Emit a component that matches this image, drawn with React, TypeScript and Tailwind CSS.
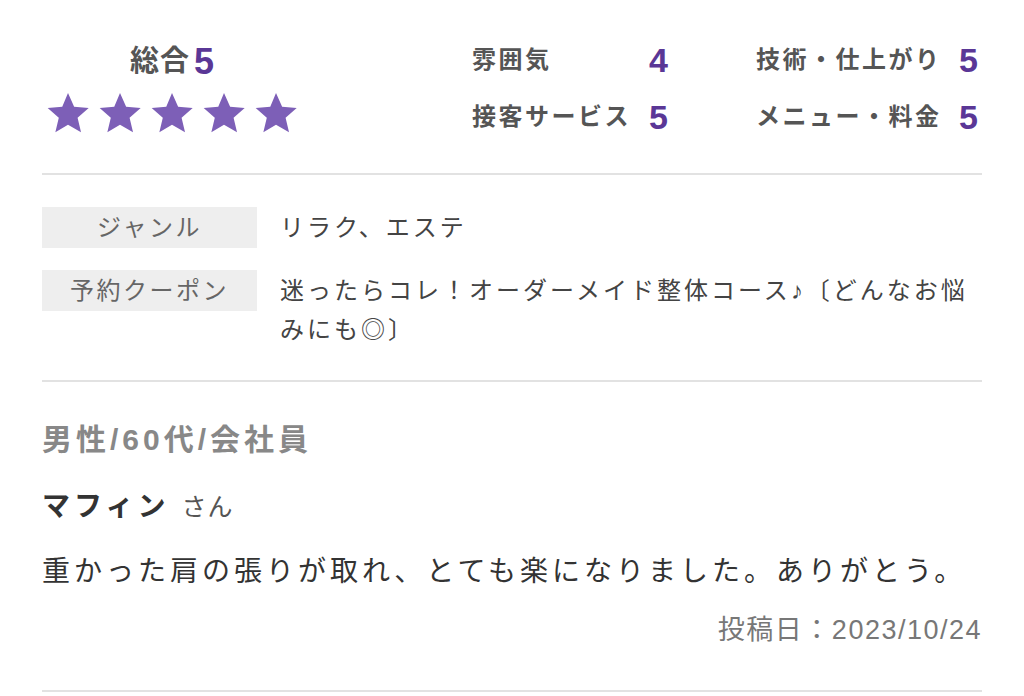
import React from 'react';

const FONT = { fontFamily: '"Liberation Sans", "Noto Sans CJK JP", sans-serif' };

type Rating = { label: string; score: number };

const col1: Rating[] = [
  { label: '雰囲気', score: 4 },
  { label: '接客サービス', score: 5 },
];
const col2: Rating[] = [
  { label: '技術・仕上がり', score: 5 },
  { label: 'メニュー・料金', score: 5 },
];

function Star() {
  return (
    <svg viewBox="0 0 24 24" className="w-[46px] h-[46px]" fill="#7d5fb7">
      <path d="M12 1.6l3.2 7.1 7.6.7-5.8 5.1 1.8 7.6L12 18.1l-6.6 4 1.8-7.6L1.4 9.4 9 8.7z" />
    </svg>
  );
}

function RatingItem({ label, score, width }: Rating & { width: string }) {
  return (
    <div className={`flex items-center justify-between h-[40px] ${width}`}>
      <span className="text-[24px] font-bold text-[#555] tracking-[2.5px]">{label}</span>
      <span className="text-[34px] font-bold text-[#5a3796] leading-none">{score}</span>
    </div>
  );
}

export default function App() {
  return (
    <div className="w-[1024px] h-[696px] bg-white px-[42px]" style={FONT}>
      {/* Ratings */}
      <div className="flex pt-[40px] pb-[36px]">
        <div className="w-[260px] flex flex-col items-center">
          <div className="h-[44px] flex items-center">
            <span className="text-[29px] font-bold text-[#555] tracking-[1px]">総合</span>
            <span className="text-[36px] font-bold text-[#5a3796] ml-[4px]">5</span>
          </div>
          <div className="flex gap-[6px] mt-[6px] pl-[3px] self-start">
            {[0, 1, 2, 3, 4].map(i => (
              <Star key={i} />
            ))}
          </div>
        </div>
        <div className="ml-[170px] flex gap-[88px]">
          <div className="flex flex-col gap-[17px]">
            {col1.map(r => (
              <RatingItem key={r.label} {...r} width="w-[196px]" />
            ))}
          </div>
          <div className="flex flex-col gap-[17px]">
            {col2.map(r => (
              <RatingItem key={r.label} {...r} width="w-[222px]" />
            ))}
          </div>
        </div>
      </div>

      <div className="border-t-2 border-[#e2e2e2]" />

      {/* Genre / coupon */}
      <div className="pt-[32px] pb-[31px] flex flex-col gap-[22px]">
        <div className="flex items-start gap-[23px]">
          <div className="w-[215px] h-[41px] shrink-0 bg-[#eeeeee] flex items-center justify-center text-[24px] text-[#666] tracking-[2.5px]">
            ジャンル
          </div>
          <p className="text-[24px] leading-[39px] mt-[1px] text-[#444] tracking-[3px]">リラク、エステ</p>
        </div>
        <div className="flex items-start gap-[23px]">
          <div className="w-[215px] h-[41px] shrink-0 bg-[#eeeeee] flex items-center justify-center text-[24px] text-[#666] tracking-[2.5px]">
            予約クーポン
          </div>
          <p className="text-[24px] leading-[39px] mt-[1px] text-[#444] tracking-[3px]">
            迷ったらコレ！オーダーメイド整体コース♪〔どんなお悩みにも◎〕
          </p>
        </div>
      </div>

      <div className="border-t-2 border-[#e2e2e2]" />

      {/* Review */}
      <div className="pt-[38px] pb-[40px]">
        <p className="text-[30px] leading-[40px] font-bold text-[#888] tracking-[4px]">男性/60代/会社員</p>
        <div className="mt-[27px] h-[40px] flex items-baseline">
          <span className="text-[28px] leading-[40px] font-bold text-[#333] tracking-[4px]">マフィン</span>
          <span className="text-[25px] leading-[40px] text-[#555] ml-[12px] tracking-[1px]">さん</span>
        </div>
        <p className="mt-[25px] text-[28px] leading-[40px] text-[#333] tracking-[4px]">
          重かった肩の張りが取れ、とても楽になりました。ありがとう。
        </p>
        <p className="mt-[18px] text-[27px] leading-[40px] text-[#777] text-right tracking-[1.5px]">
          投稿日：2023/10/24
        </p>
      </div>

      <div className="border-t-2 border-[#e2e2e2]" />
    </div>
  );
}
